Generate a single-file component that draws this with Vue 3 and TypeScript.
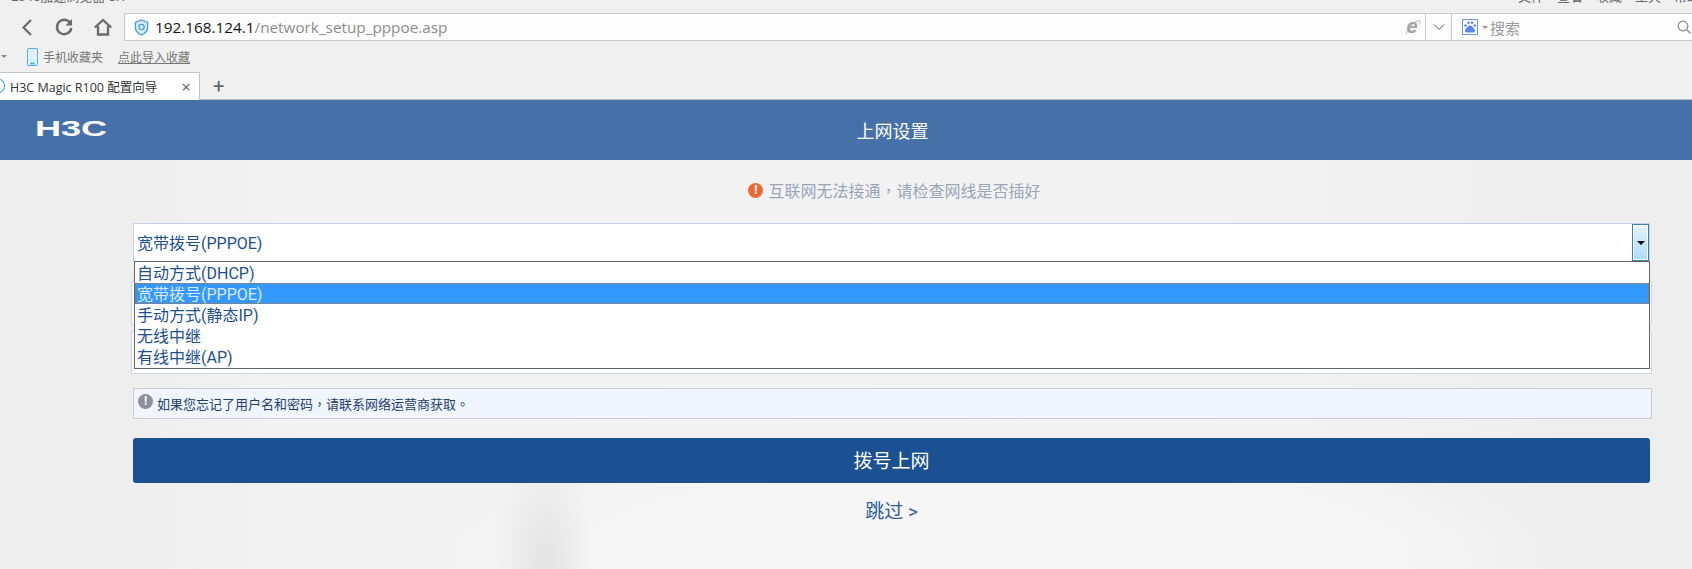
<script setup lang="ts">
const options: string[] = ['自动方式(DHCP)', '宽带拨号(PPPOE)', '手动方式(静态IP)', '无线中继', '有线中继(AP)']
const selected = '宽带拨号(PPPOE)'
const menus: string[] = ['文件', '查看', '收藏', '工具', '帮助']
</script>

<template>
  <div class="shot">
    <div class="chrome">
      <div class="title-strip">
        <span class="app-name">2345加速浏览器 8.1</span>
        <span class="menus"><span v-for="m in menus" :key="m">{{ m }}</span></span>
      </div>
      <div class="nav-row">
        <div class="nav-buttons">
          <svg width="16" height="20" viewBox="0 0 16 20"><path d="M12 3 4.500 10.500 12 18" fill="none" stroke="#6a6a6a" stroke-width="2.200" /></svg>
          <svg width="20" height="20" viewBox="0 0 20 20"><path d="M16.300 6.200A7.200 7.200 0 1 0 17.300 11" fill="none" stroke="#6a6a6a" stroke-width="2.400" /><path d="M18 2v6.500h-6.500z" fill="#6a6a6a" /></svg>
          <svg width="20" height="20" viewBox="0 0 20 20"><path d="M1.800 10.500 10 3l8.200 7.500M5 9v8.500h10V9" fill="none" stroke="#6a6a6a" stroke-width="2.300" /></svg>
        </div>
        <div class="url-bar">
          <svg class="shield" width="15" height="17" viewBox="0 0 16 18"><path d="M8 1 14.500 3.500V9c0 4-3 6.500-6.500 8C4.500 15.500 1.500 13 1.500 9V3.500z" fill="#d7ecfa" stroke="#3f9bdc" stroke-width="1.400" /><circle cx="8" cy="8.500" r="2.800" fill="#eef8fe" stroke="#3f9bdc" stroke-width="1.400" /></svg>
          <span class="url"><span class="host">192.168.124.1</span>/network_setup_pppoe.asp</span>
          <svg class="ie" width="16" height="17" viewBox="0 0 16 17"><text x="1.500" y="14" class="ie-letter">e</text><path d="M1 15.500C2.500 9 9 2.500 14.500 1.500c1 1 .5 2.500-.5 4" fill="none" stroke="#b5b5b5" stroke-width="1" /></svg>
          <div class="url-drop">
            <svg width="12" height="8" viewBox="0 0 12 8"><path d="M1 1.500 6 6.500l5-5" fill="none" stroke="#555" stroke-width="1" /></svg>
          </div>
          <div class="search">
            <svg width="16" height="16" viewBox="0 0 16 16"><rect x=".5" y=".5" width="15" height="15" fill="#fff" stroke="#6b93ee" /><g fill="#5b87ec"><circle cx="3.500" cy="6.500" r="1.300" /><circle cx="6.500" cy="3.800" r="1.300" /><circle cx="10" cy="3.800" r="1.300" /><circle cx="12.700" cy="6.500" r="1.300" /><path d="M8 6.500c2 0 5 3.500 5 5.500s-3 1.500-5 1.500-5 .5-5-1.500 3-5.500 5-5.500z" /></g></svg>
            <i class="search-caret"></i>
            <span class="search-label">搜索</span>
            <svg class="glass" width="14" height="14" viewBox="0 0 14 14"><circle cx="6" cy="6" r="4.800" fill="none" stroke="#888" stroke-width="1.200" /><path d="m9.500 9.500 4 4" stroke="#888" stroke-width="1.200" /></svg>
          </div>
        </div>
      </div>
      <div class="fav-row">
        <i class="fav-caret"></i>
        <svg width="11" height="18" viewBox="0 0 11 18"><rect x=".5" y=".5" width="10" height="17" rx="1.500" fill="#dff0fb" stroke="#56aee6" /><rect x="1.500" y="14" width="8" height="3" fill="#fff" /><rect x="3" y="14.500" width="5" height="2" fill="#56aee6" /></svg>
        <span class="fav-text">手机收藏夹</span>
        <span class="fav-link">点此导入收藏</span>
      </div>
      <div class="tab-row">
        <div class="tab">
          <span class="tab-icon"></span>
          <span class="tab-title">H3C Magic R100 配置向导</span>
          <span class="tab-close">×</span>
        </div>
        <span class="tab-add">+</span>
      </div>
    </div>

    <header class="page-head">
      <span class="logo"><span class="logo-text">H3C</span></span>
      <h1 class="page-title">上网设置</h1>
    </header>

    <main class="page-body">
      <p class="notice"><span class="notice-mark">!</span><span>互联网无法接通<span class="tc">，</span>请检查网线是否插好</span></p>

      <div class="form">
        <div class="select-wrap">
          <div class="select">
            <span class="select-value">{{ selected }}</span>
            <span class="select-btn"><i class="select-arrow"></i></span>
          </div>
          <ul class="dropdown">
            <li v-for="o in options" :key="o" :class="{ active: o === selected }">{{ o }}</li>
          </ul>
          <div class="behind first"></div>
          <div class="behind second"></div>
        </div>

        <div class="tip"><span class="tip-mark">!</span><span>如果您忘记了用户名和密码<span class="tc">，</span>请联系网络运营商获取<span class="tc">。</span></span></div>
        <button class="submit">拨号上网</button>
        <a class="skip">跳过 &gt;</a>
      </div>
    </main>
  </div>
</template>

<style>
html, body { margin: 0; background: #f0f0f0; }
</style>

<style scoped>
.shot {
  width: 1692px;
  height: 569px;
  overflow: hidden;
  font-family: Roboto, "Noto Sans CJK SC", sans-serif;
  background: #f0f0f0;
}
.tc { font-family: "Noto Sans CJK TC", sans-serif; }
.chrome { height: 100px; background: #f0f0f0; display: flex; flex-direction: column; }
.title-strip {
  height: 13px;
  overflow: hidden;
  display: flex;
  justify-content: space-between;
  font-size: 13px;
  line-height: 13px;
  color: #666;
}
.app-name { margin: -10px 0 0 11px; }
.menus { display: flex; gap: 13px; margin: -10px -8px 0 0; }
.nav-row { height: 28px; display: flex; align-items: center; }
.nav-buttons { width: 124px; padding-left: 19px; box-sizing: border-box; display: flex; gap: 19px; align-items: center; flex: none; }
.url-bar {
  flex: 1;
  height: 26px;
  border: 1px solid #c9c9c9;
  border-right: 0;
  background: #fdfdfd;
  display: flex;
  align-items: center;
}
.shield { margin-left: 9px; }
.url { margin-left: 6px; font-family: "Open Sans", sans-serif; font-size: 15.300px; color: #8c8c8c; }
.host { color: #111; }
.ie { margin-left: auto; margin-right: 4px; }
.ie-letter { font: italic 700 20px "Liberation Sans", sans-serif; fill: #a3a3a3; }
.url-drop {
  width: 25px;
  height: 26px;
  border-left: 1px solid #c9c9c9;
  border-right: 1px solid #c9c9c9;
  display: flex;
  align-items: center;
  justify-content: center;
}
.search { width: 240px; padding-left: 10px; box-sizing: border-box; display: flex; align-items: center; }
.search-caret { margin-left: 4px; border: 3px solid transparent; border-top: 3px solid #999; border-bottom: 0; }
.search-label { margin-left: 2px; font-size: 15px; color: #9a9a9a; }
.glass { margin-left: auto; margin-right: 1px; }
.fav-row { height: 31px; display: flex; align-items: center; font-size: 12px; color: #777; }
.fav-caret { margin: 0 20px 0 1px; border: 3px solid transparent; border-top: 3px solid #888; border-bottom: 0; }
.fav-text { margin-left: 5px; }
.fav-link { margin-left: 15px; text-decoration: underline; }
.tab-row { height: 28px; display: flex; align-items: center; border-bottom: 1px solid #bdbdbd; box-sizing: border-box; }
.tab {
  width: 200px;
  height: 28px;
  box-sizing: border-box;
  background: #fff;
  border-right: 1px solid #c4c4c4;
  border-top: 1px solid #c4c4c4;
  display: flex;
  align-items: center;
  overflow: hidden;
  font-family: "Open Sans", "Noto Sans CJK SC", sans-serif;
  font-size: 12.500px;
  color: #333;
}
.tab-icon { width: 10px; height: 12px; margin-left: -7px; border: 1px solid #3f9bdc; border-radius: 50%; flex: none; }
.tab-title { margin-left: 5px; white-space: nowrap; }
.tab-close { margin-left: auto; margin-right: 8px; font-size: 17px; line-height: 17px; color: #666; }
.tab-add { margin-left: 13px; font-size: 20px; line-height: 20px; color: #666; }
.page-head {
  height: 60px;
  box-sizing: border-box;
  padding: 0 40px 0 133px;
  background: #4670a8;
  display: flex;
  align-items: center;
  justify-content: center;
  position: relative;
}
.logo { position: absolute; left: 35px; top: 20px; height: 17px; width: 73px; overflow: hidden; }
.logo-text {
  display: block;
  font: 700 22px/17px "Liberation Sans", sans-serif;
  color: #fff;
  transform: scaleX(1.640);
  transform-origin: left center;
}
.page-title { margin: 0; font-size: 18px; font-weight: 400; color: #fff; line-height: 60px; position: relative; top: 2px; }
.page-body {
  height: 409px;
  box-sizing: border-box;
  background:
    radial-gradient(ellipse 50px 110px at 545px 400px, #e3e3e3, rgba(227, 227, 227, 0)),
    radial-gradient(ellipse 560px 130px at 1000px 400px, #f6f6f6 70%, rgba(246, 246, 246, 0)),
    linear-gradient(90deg, #eeeeee 0, #eeeeee 130px, #f3f3f3 300px, #f2f2f2 1300px, #eeeeee 1560px, #eeeeee 100%);
  padding-top: 18px;
}
.notice {
  margin: 0;
  height: 24px;
  box-sizing: border-box;
  padding: 0 36px 0 133px;
  display: flex;
  align-items: center;
  justify-content: center;
  gap: 5px;
  font-size: 16px;
  color: #9aa5b8;
}
.notice-mark {
  width: 15px;
  height: 15px;
  border-radius: 50%;
  background: #ea6a37;
  color: #fff;
  font-size: 12px;
  font-weight: 700;
  line-height: 15px;
  text-align: center;
}
.form { margin: 21px 40px 0 133px; display: flex; flex-direction: column; }
.select-wrap { height: 151px; position: relative; }
.select {
  height: 39px;
  width: 1517px;
  box-sizing: border-box;
  border: 1px solid #c2d3e6;
  background: #fff;
  padding: 0 0 0 3px;
  display: flex;
  align-items: center;
  justify-content: space-between;
  font-size: 16px;
  color: #1d4f91;
}
.select-value { margin-top: -2px; }
.select-btn {
  width: 17px;
  height: 37px;
  box-sizing: border-box;
  border: 1px solid #3c7fb1;
  box-shadow: inset 0 0 0 1px #fff;
  background: linear-gradient(#e5f4fc, #a9dcf7);
  display: flex;
  align-items: center;
  justify-content: center;
}
.select-arrow { border: 4px solid transparent; border-top: 4px solid #000; border-bottom: 0; }
.dropdown {
  position: absolute;
  z-index: 2;
  left: 1px;
  top: 38px;
  width: 1516px;
  height: 108px;
  box-sizing: border-box;
  margin: 0;
  padding: 0;
  list-style: none;
  background: #fff;
  border: 1px solid #646464;
  font-size: 16px;
  line-height: 23px;
  color: #1d4f91;
}
.dropdown li { height: 21px; padding-left: 2px; white-space: nowrap; }
.dropdown li.active { background: #3399ff; color: #dbe9ff; outline: 1px dotted #b5702c; outline-offset: -1px; }
.behind { position: absolute; left: -2px; width: 1521px; background: #fff; border: 1px solid #c9d6e8; box-sizing: border-box; }
.behind.first { top: 58px; height: 44px; }
.behind.second { top: 108px; height: 43px; }
.tip {
  margin-top: 14px;
  height: 31px;
  width: 1519px;
  box-sizing: border-box;
  border: 1px solid #cbcbcb;
  background: #f0f5fe;
  display: flex;
  align-items: center;
  padding: 0 0 1px 4px;
  font-size: 13px;
  color: #1f3f70;
}
.tip-mark {
  width: 15px;
  height: 15px;
  margin: -4px 4px 0 0;
  border-radius: 50%;
  background: #8b8f9c;
  color: #fff;
  font-size: 12px;
  font-weight: 700;
  line-height: 15px;
  text-align: center;
}
.submit {
  margin-top: 19px;
  width: 1517px;
  height: 45px;
  padding: 0 0 3px;
  border: 0;
  border-radius: 3px;
  background: #1b5092;
  color: #fff;
  font-family: inherit;
  font-size: 19px;
}
.skip { margin-top: 16px; height: 26px; width: 1517px; text-align: center; font-size: 19px; line-height: 26px; color: #2f5b9c; }
</style>
